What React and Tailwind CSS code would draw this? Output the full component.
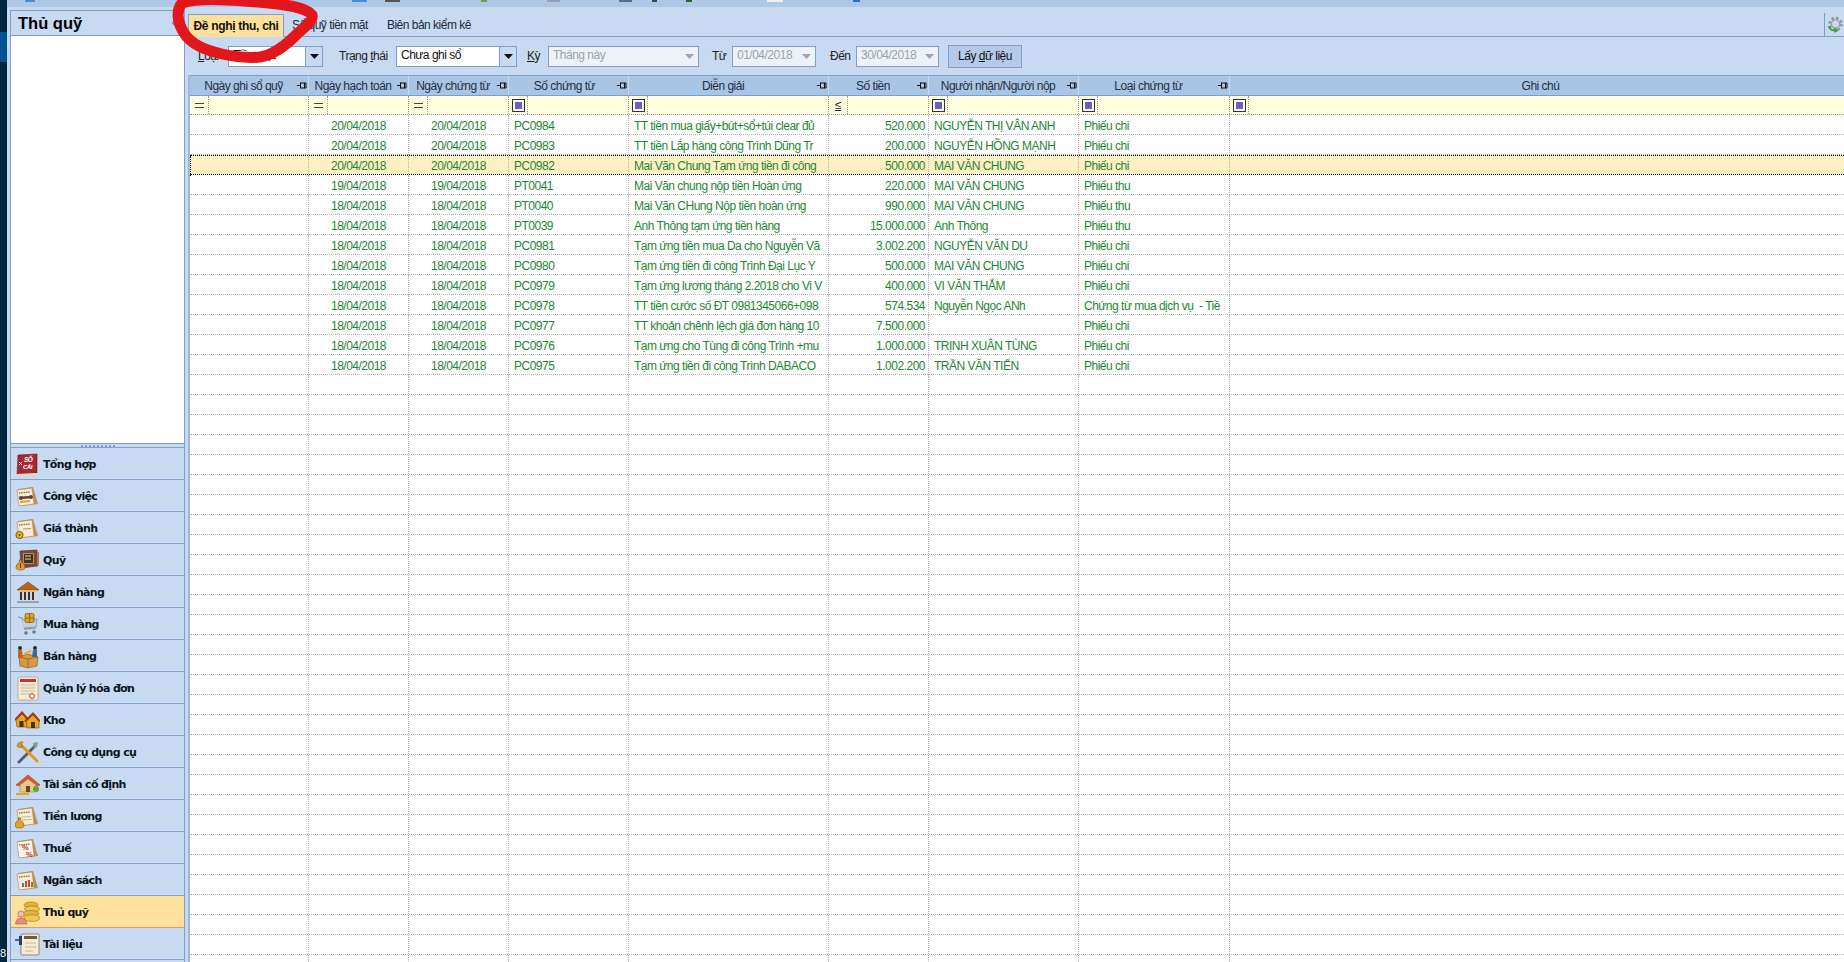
import React from "react";

const GRID = "grid grid-cols-[119px_100px_100px_120px_200px_100px_150px_151px_615px]";
const FONT = "font-['Liberation_Sans',Arial,sans-serif] text-[12px] tracking-[-0.5px]";

const Paper = ({ children, fill = "#f6ecd2" }) => (
  <>
    <path d="M3 5 L18 3 L23 20 L6 22 Z" fill="#b98f5c" />
    <path d="M2 6 L17 4 L19 20 L4 22 Z" fill={fill} stroke="#a98a60" strokeWidth="0.6" />
    <path d="M4 9 L15 8" stroke="#8a6f4c" strokeWidth="1.4" strokeDasharray="1.5 0.8" />
    {children}
  </>
);
const Bag = ({ x = 1, y = 14 }) => (
  <g transform={`translate(${x} ${y})`}>
    <path d="M3 0 L6 0 L5.2 2 Q9 4 9 7.5 Q9 10 4.5 10 Q0 10 0 7.5 Q0 4 3.8 2 Z" fill="#e8a020" stroke="#7a4a10" strokeWidth="0.6" />
  </g>
);

const icons = {
  tonghop: (
    <>
      <path d="M3 3 L22 2 L22 21 L2 22 Z" fill="#a32a30" stroke="#6d1a1e" strokeWidth="0.6" />
      <path d="M2 22 L22 21 L22 23 L3 24 Z" fill="#e8d8b8" />
      <path d="M4 10 l3 3 M7 10 l-3 3" stroke="#fff" strokeWidth="0.9" />
      <text x="9" y="10" fontSize="6.5" fontWeight="700" fontStyle="italic" fill="#fff" fontFamily="Liberation Sans">SỔ</text>
      <text x="8" y="17" fontSize="6" fontWeight="700" fontStyle="italic" fill="#fff" fontFamily="Liberation Sans">CÁI</text>
    </>
  ),
  congviec: (
    <Paper>
      <path d="M5 14 L16 13" stroke="#5b4630" strokeWidth="2.4" />
      <circle cx="6" cy="14" r="2" fill="#5b4630" />
      <circle cx="16" cy="13" r="2" fill="#5b4630" />
      <path d="M5 18 L15 17" stroke="#d9a441" strokeWidth="2" />
    </Paper>
  ),
  giathanh: (
    <Paper>
      <path d="M8 13 L16 12.5" stroke="#c98a4a" strokeWidth="1.2" />
      <circle cx="4.5" cy="19" r="3.6" fill="#e5b31f" stroke="#5b4210" strokeWidth="0.8" />
      <circle cx="4.5" cy="19" r="1" fill="#5b4210" />
    </Paper>
  ),
  quy: (
    <>
      <path d="M5 3 L22 2 L23 18 L6 20 Z" fill="#7b4a33" stroke="#4b2a1a" strokeWidth="0.6" />
      <rect x="8.5" y="5.5" width="10" height="10" fill="#3d3229" stroke="#c7a37e" strokeWidth="0.8" />
      <path d="M10 8 h6 M10 11 h6" stroke="#c4a95f" strokeWidth="1.3" />
      <path d="M22 4 L24 4 L24 17 L22 18 Z" fill="#b07a57" />
      <Bag x={1} y={12} />
      <path d="M5.5 15 v5" stroke="#7a3d10" strokeWidth="1.2" />
    </>
  ),
  nganhang: (
    <>
      <path d="M2 10 L13 2 L24 10 Z" fill="#b5651d" stroke="#6e3c10" strokeWidth="0.6" />
      <path d="M4 10 H22 V12 H4 Z" fill="#e6b77a" />
      <path d="M6 12 v8 M10 12 v8 M14 12 v8 M18 12 v8" stroke="#3f3128" strokeWidth="2" />
      <path d="M2 21 H24 V23 H2 Z" fill="#a9a099" />
    </>
  ),
  muahang: (
    <>
      <path d="M3 5 L7 6 L10 17 L21 16" stroke="#7f8f9c" strokeWidth="1.2" fill="none" />
      <path d="M7 8 L22 7 L21 15 L9 16" fill="#c4d2de" stroke="#7f8f9c" strokeWidth="0.8" />
      <rect x="10" y="1.5" width="9" height="9" rx="1.5" fill="#e0a51e" stroke="#7a5510" strokeWidth="0.7" />
      <path d="M14.5 1.5 v9 M10 6 h9" stroke="#8a5c12" strokeWidth="0.8" />
      <circle cx="11" cy="21" r="1.8" fill="#6d7a86" />
      <circle cx="19" cy="20" r="1.8" fill="#6d7a86" />
    </>
  ),
  banhang: (
    <>
      <path d="M4 13 L13 10 L23 13 L22 22 L13 24 L5 22 Z" fill="#d69a45" stroke="#7d5118" strokeWidth="0.6" />
      <path d="M13 15 V24 M4 13 L13 15 L23 13" stroke="#8a5b1c" strokeWidth="0.7" fill="none" />
      <circle cx="5" cy="4" r="2" fill="#2e2a26" />
      <path d="M3 6 L7 6 L8 14 L3 14 Z" fill="#c8601e" />
      <circle cx="20" cy="4" r="2" fill="#2e2a26" />
      <path d="M18 6 L22 6 L22 13 L17 13 Z" fill="#3e6a9b" />
      <path d="M9 10 L16 7" stroke="#e3b23c" strokeWidth="2.2" />
    </>
  ),
  hoadon: (
    <>
      <rect x="3" y="1" width="20" height="23" rx="1" fill="#f3ead8" stroke="#b39872" strokeWidth="0.7" />
      <rect x="5" y="3" width="16" height="3" fill="#c9372c" />
      <path d="M6 9 H20 M6 12 H20 M6 15 H20 M6 18 H15" stroke="#c9b894" strokeWidth="1" />
      <circle cx="17" cy="20" r="2.4" fill="none" stroke="#c9372c" strokeWidth="0.9" />
    </>
  ),
  kho: (
    <>
      <path d="M1 12 L7 6 L13 12 V19 H2 Z" fill="#e2a91f" stroke="#6e4a10" strokeWidth="0.6" />
      <path d="M0 12 L7 4.5 L13.5 12" fill="none" stroke="#b3301e" strokeWidth="2" />
      <path d="M11 13 L18 7 L24 13 V20 H12 Z" fill="#e2a91f" stroke="#6e4a10" strokeWidth="0.6" />
      <path d="M10 13.5 L18 5.5 L25 13.5" fill="none" stroke="#b3301e" strokeWidth="2" />
      <rect x="4.5" y="13" width="4" height="6" fill="#3e2f1e" />
      <rect x="16" y="14" width="4" height="6" fill="#3e2f1e" />
    </>
  ),
  congcu: (
    <>
      <path d="M4 22 L20 6" stroke="#5a5f63" strokeWidth="3" strokeLinecap="round" />
      <path d="M18 3 L23 2 L22 7 L19 8 Z" fill="#8d9398" />
      <path d="M6 5 L22 21" stroke="#d99a1f" strokeWidth="3" strokeLinecap="round" />
      <path d="M2 6 Q3 1 8 2 L6 5 L8 7 Q4 9 2 6 Z" fill="#d99a1f" stroke="#84590f" strokeWidth="0.5" />
    </>
  ),
  taisan: (
    <>
      <path d="M1 13 L13 3 L25 13 L22 14 L13 7 L4 14 Z" fill="#d8562a" stroke="#8f2f12" strokeWidth="0.5" />
      <path d="M5 13 L13 7 L21 13 V20 H5 Z" fill="#e9c690" stroke="#9a7540" strokeWidth="0.5" />
      <rect x="11" y="14" width="4" height="6" fill="#6b4322" />
      <path d="M1 22 H14" stroke="#e3a91e" strokeWidth="2.2" />
      <circle cx="21" cy="17" r="3" fill="#58a838" />
    </>
  ),
  tienluong: (
    <Paper>
      <path d="M7 13 L16 12.5 M7 16 L17 15.5" stroke="#c9b894" strokeWidth="1" />
      <Bag x={0} y={14} />
    </Paper>
  ),
  thue: (
    <Paper fill="#fbf5e7">
      <text x="7" y="14" fontSize="7.5" fontWeight="700" fill="#cc2a2a" fontFamily="Liberation Sans">%</text>
      <text x="11" y="21" fontSize="7.5" fontWeight="700" fill="#cc2a2a" fontFamily="Liberation Sans">%</text>
    </Paper>
  ),
  ngansach: (
    <Paper>
      <rect x="7" y="15" width="2" height="4" fill="#4a78b5" />
      <rect x="10" y="13" width="2" height="6" fill="#cc4a3a" />
      <rect x="13" y="12" width="2" height="7" fill="#cc4a3a" />
      <rect x="16" y="14" width="2" height="5" fill="#4e9a45" />
    </Paper>
  ),
  thuquy: (
    <>
      <ellipse cx="16" cy="5" rx="7" ry="3" fill="#e3b43c" stroke="#9a7413" strokeWidth="0.6" />
      <ellipse cx="17" cy="9" rx="7.5" ry="3" fill="#edc655" stroke="#9a7413" strokeWidth="0.6" />
      <ellipse cx="16" cy="13.5" rx="8" ry="3" fill="#e3b43c" stroke="#9a7413" strokeWidth="0.6" />
      <ellipse cx="17" cy="18" rx="8" ry="3.4" fill="#edc655" stroke="#9a7413" strokeWidth="0.6" />
      <circle cx="6" cy="14" r="3.2" fill="#f0bfa8" stroke="#8a4a38" strokeWidth="0.5" />
      <path d="M0.5 24 Q1 18 6 18 Q11 18 12 24 Z" fill="#e98b80" stroke="#a24a40" strokeWidth="0.5" />
    </>
  ),
  tailieu: (
    <>
      <rect x="6" y="2" width="18" height="21" rx="1" fill="#f4ebd6" stroke="#87704e" strokeWidth="0.8" />
      <rect x="9" y="4" width="13" height="3" fill="#6e5a40" />
      <path d="M10 11 H21 M10 15 H21 M10 19 H18" stroke="#c9b894" strokeWidth="1" />
      <path d="M0 8 L4 8" stroke="#3a67b0" strokeWidth="2" />
      <rect x="4" y="4" width="3" height="9" fill="#1f3d78" />
    </>
  ),
};

const navItems = [
  ["Tổng hợp", "tonghop"],
  ["Công việc", "congviec"],
  ["Giá thành", "giathanh"],
  ["Quỹ", "quy"],
  ["Ngân hàng", "nganhang"],
  ["Mua hàng", "muahang"],
  ["Bán hàng", "banhang"],
  ["Quản lý hóa đơn", "hoadon"],
  ["Kho", "kho"],
  ["Công cụ dụng cụ", "congcu"],
  ["Tài sản cố định", "taisan"],
  ["Tiền lương", "tienluong"],
  ["Thuế", "thue"],
  ["Ngân sách", "ngansach"],
  ["Thủ quỹ", "thuquy"],
  ["Tài liệu", "tailieu"],
];

const columns = [
  ["Ngày ghi sổ quỹ", "="],
  ["Ngày hạch toán", "="],
  ["Ngày chứng từ", "="],
  ["Số chứng từ", "s"],
  ["Diễn giải", "s"],
  ["Số tiền", "le"],
  ["Người nhận/Người nộp", "s"],
  ["Loại chứng từ", "s"],
  ["Ghi chú", "s"],
];

const rows = [
  ["20/04/2018", "PC0984", "TT tiền mua giấy+bút+sổ+túi clear đủ", "520.000", "NGUYỄN THỊ VÂN ANH", "Phiếu chi"],
  ["20/04/2018", "PC0983", "TT tiền Lắp hàng công Trình Dũng Tr", "200.000", "NGUYỄN HỒNG MẠNH", "Phiếu chi"],
  ["20/04/2018", "PC0982", "Mai Văn Chung Tạm ứng tiền đi công", "500.000", "MAI VĂN CHUNG", "Phiếu chi"],
  ["19/04/2018", "PT0041", "Mai Văn chung nộp tiền Hoàn ứng", "220.000", "MAI VĂN CHUNG", "Phiếu thu"],
  ["18/04/2018", "PT0040", "Mai Văn CHung Nộp tiền hoàn ứng", "990.000", "MAI VĂN CHUNG", "Phiếu thu"],
  ["18/04/2018", "PT0039", "Anh Thông tạm ứng tiền hàng", "15.000.000", "Anh Thông", "Phiếu thu"],
  ["18/04/2018", "PC0981", "Tạm ứng tiền mua Da cho Nguyễn Vă", "3.002.200", "NGUYỄN VĂN DU", "Phiếu chi"],
  ["18/04/2018", "PC0980", "Tạm ứng tiền đi công Trình Đại Lục Y", "500.000", "MAI VĂN CHUNG", "Phiếu chi"],
  ["18/04/2018", "PC0979", "Tạm ứng lương tháng 2.2018 cho Vi V", "400.000", "VI VĂN THẮM", "Phiếu chi"],
  ["18/04/2018", "PC0978", "TT tiền cước số ĐT 0981345066+098", "574.534", "Nguyễn Ngọc ANh", "Chứng từ mua dịch vụ  - Tiề"],
  ["18/04/2018", "PC0977", "TT khoản chênh lệch giá đơn hàng 10", "7.500.000", "", "Phiếu chi"],
  ["18/04/2018", "PC0976", "Tạm ưng cho Tùng đi công Trình +mu", "1.000.000", "TRỊNH XUÂN TÙNG", "Phiếu chi"],
  ["18/04/2018", "PC0975", "Tạm ứng tiền đi công Trình DABACO", "1.002.200", "TRẦN VĂN TIẾN", "Phiếu chi"],
];

const Pin = () => (
  <svg width="10" height="9" viewBox="0 0 10 9" className="shrink-0">
    <path d="M0 4.5 H3 M3.5 1.5 V7.5 M3.5 2 H9 V7 H3.5 M7.5 2 V7" stroke="#111" strokeWidth="1" fill="none" />
  </svg>
);

const Arrow = ({ color = "#111" }) => (
  <svg width="9" height="5" viewBox="0 0 9 5"><path d="M0 0 H9 L4.5 5 Z" fill={color} /></svg>
);

const Combo = ({ w, text, disabled }) => (
  <div className={`${w} h-[21px] flex items-stretch border border-[#7e9fc8] ${disabled ? "bg-[#eef2f7] text-[#9aa3ad]" : "bg-white text-[#111]"}`}>
    <span className="flex-1 pl-[4px] leading-[17px] whitespace-nowrap overflow-hidden">{text}</span>
    <span className={`w-[17px] flex items-center justify-center ${disabled ? "" : "bg-[#c8daf1] border-l border-[#7e9fc8]"}`}>
      <Arrow color={disabled ? "#9aa3ad" : "#111"} />
    </span>
  </div>
);

const Op = ({ kind }) => {
  if (kind === "=")
    return (
      <span className="w-[19px] flex items-center justify-center border-r border-dotted border-[#999]">
        <span className="w-[9px] h-[5px] border-y border-[#444]" />
      </span>
    );
  if (kind === "le")
    return (
      <span className="w-[19px] flex items-center justify-center border-r border-dotted border-[#999] text-[#222] text-[12px] underline">≤</span>
    );
  return (
    <span className="w-[19px] flex items-center justify-center border-r border-dotted border-[#999]">
      <span className="w-[13px] h-[13px] border border-[#333] bg-white flex items-center justify-center">
        <span className="w-[7px] h-[7px] bg-[#6a5fc9]" />
      </span>
    </span>
  );
};

const topBits = [
  "ml-[18px] w-[10px] bg-[#eaf2fb] border border-[#4a8bd0]",
  "ml-[317px] w-[15px] bg-[#4a8bd0]",
  "ml-[18px] w-[15px] bg-[#555]",
  "ml-[81px] w-[6px] bg-[#6aa84a]",
  "ml-[60px] w-[13px] bg-[#94a2b4]",
  "ml-[59px] w-[13px] bg-[#dde6f2] border border-[#5c6c88]",
  "ml-[20px] w-[5px] bg-[#444]",
  "ml-[29px] w-[6px] bg-[#1c6a2a]",
  "ml-[75px] w-[16px] bg-[#f0f0f0]",
  "ml-[70px] w-[7px] bg-[#2a72c8]",
];

export default function App() {
  return (
    <div className={`relative w-[1844px] h-[962px] overflow-hidden flex bg-[#c8daf1] ${FONT}`}>
      {/* desktop edge */}
      <div className="w-[7px] h-full flex flex-col bg-[#012840]">
        <div className="h-[32px]" />
        <div className="h-[30px] bg-[#01538d]" />
        <div className="flex-1" />
        <span className="text-white text-[11px] leading-[14px] pb-[2px] tracking-normal">8</span>
      </div>

      <div className="flex-1 flex flex-col min-w-0">
        {/* top strip */}
        <div className="h-[7px] bg-[#aec7e6] flex items-start">
          {topBits.map((c, i) => (
            <span key={i} className={`h-[2px] ${c}`} />
          ))}
        </div>

        <div className="flex-1 flex min-h-0">
          {/* sidebar */}
          <aside className="ml-[3px] mt-[3px] w-[175px] flex flex-col border-x border-[#7e9fc8]">
            <div className="h-[26px] flex items-center justify-between border-y border-[#7e9fc8] pl-[7px] pr-[6px]">
              <span className="font-bold text-[16.5px] tracking-normal text-black">Thủ quỹ</span>
              <svg width="7" height="10" viewBox="0 0 7 10"><path d="M6 1 L1.5 5 L6 9" stroke="#6e8fb8" strokeWidth="1.4" fill="none" /></svg>
            </div>
            <div className="h-[407px] bg-white" />
            <div className="h-[5px] flex items-center justify-center gap-[2px] border-y border-[#7e9fc8]">
              {Array.from({ length: 9 }).map((_, i) => (
                <span key={i} className="w-[2px] h-[2px] bg-[#7e9fc8]" />
              ))}
            </div>
            {navItems.map(([label, key]) => {
              const active = label === "Thủ quỹ";
              return (
                <div
                  key={key}
                  className={`h-[32px] shrink-0 flex items-center pt-[3px] border-b ${active ? "bg-[#fde29c] border-[#e39a60]" : "border-[#7e9fc8]"}`}
                >
                  <svg width="25" height="25" viewBox="0 0 25 25" className="ml-[4px] shrink-0 -mt-[2px]">
                    {icons[key]}
                  </svg>
                  <span className="ml-[3px] font-['DejaVu_Sans',sans-serif] font-bold text-[11px] tracking-[-0.65px] text-[#0b1420] whitespace-nowrap">
                    {label}
                  </span>
                </div>
              );
            })}
          </aside>

          {/* main */}
          <main className="flex-1 min-w-0 flex flex-col">
            {/* tabs */}
            <div className="h-[30px] shrink-0 flex items-end border-b border-[#7e9fc8] text-[#1c2a3a]">
              <div className="ml-[3px] w-[96px] h-[23px] -mb-px flex items-center justify-center bg-[#fee09a] border border-[#7e9fc8] border-b-0 font-bold tracking-[-0.3px] text-[#111]">
                Đề nghị thu, chi
              </div>
              <span className="ml-[8px] h-[23px] leading-[24px]">Sổ quỹ tiền mặt</span>
              <span className="ml-[19px] h-[23px] leading-[24px]">Biên bản kiểm kê</span>
              <div className="ml-auto w-[20px] h-[23px] border-l border-[#7e9fc8] flex items-center justify-center">
                <svg width="18" height="18" viewBox="0 0 18 18">
                  <circle cx="9.5" cy="8" r="6" fill="none" stroke="#8e9296" strokeWidth="2.4" strokeDasharray="2.4 2.3" />
                  <circle cx="9.5" cy="8" r="4.2" fill="none" stroke="#9ca0a4" strokeWidth="1.5" />
                  <path d="M3 10 Q3.5 14.5 9 14.5" fill="none" stroke="#2fa52f" strokeWidth="2" />
                  <path d="M8.5 11.5 L12.5 14.5 L8.5 17 Z" fill="#2fa52f" />
                </svg>
              </div>
            </div>

            {/* toolbar */}
            <div className="h-[38px] shrink-0 flex items-center text-[#222]">
              <span className="ml-[13px] w-[30px]"><u>L</u>oại</span>
              <Combo w="w-[95px]" text="Tiền mặt" />
              <span className="ml-[16px] w-[57px]">Trạng <u>t</u>hái</span>
              <Combo w="w-[121px]" text="Chưa ghi sổ" />
              <span className="ml-[10px] w-[21px]"><u>K</u>ỳ</span>
              <Combo w="w-[151px]" text="Tháng này" disabled />
              <span className="ml-[13px] w-[20px]">Từ</span>
              <Combo w="w-[84px]" text="01/04/2018" disabled />
              <span className="ml-[14px] w-[26px]">Đến</span>
              <Combo w="w-[83px]" text="30/04/2018" disabled />
              <button className="ml-[9px] w-[74px] h-[23px] bg-[#b3cbe9] border border-[#7e9fc8] text-[#111] tracking-[-0.5px]">
                Lấy <u>d</u>ữ liệu
              </button>
            </div>

            {/* grid */}
            <div className="flex-1 min-h-0 ml-[3px] border-l-[2px] border-[#9fb9dc] bg-white overflow-hidden">
              <div className={`${GRID} h-[21px] bg-[#a9c5e6] border-y border-[#7e9fc8] text-[#1f2f45]`}>
                {columns.map(([t], i) => (
                  <div key={t} className={`flex items-center pr-[1px] border-r border-[#c8daf1] min-w-0 ${i === 8 ? "pl-[8px]" : ""} ${i === 3 ? "pl-[3px]" : ""}`}>
                    <span className="flex-1 text-center whitespace-nowrap">{t}</span>
                    {i < 8 && <Pin />}
                  </div>
                ))}
              </div>
              <div className={`${GRID} h-[19px] bg-[#ffffe0] border-b border-dotted border-[#999]`}>
                {columns.map(([t, k]) => (
                  <div key={t} className="flex items-stretch border-r border-dotted border-[#999]">
                    <Op kind={k} />
                  </div>
                ))}
              </div>
              {Array.from({ length: 43 }).map((_, i) => {
                const r = rows[i];
                const sel = i === 2;
                return (
                  <div
                    key={i}
                    className={`${GRID} h-[20px] text-[#1d8636] ${
                      sel ? "leading-[20px] bg-[#fdf1c4] border-y border-dotted border-black" : "leading-[22px] border-b border-dotted border-[#b5b5b5]"
                    }`}
                  >
                    <div className={`border-r border-dotted border-r-[#b5b5b5] ${sel ? "border-l border-l-black" : ""}`} />
                    <div className="text-center border-r border-dotted border-[#b5b5b5]">{r && r[0]}</div>
                    <div className="text-center border-r border-dotted border-[#b5b5b5]">{r && r[0]}</div>
                    <div className="pl-[5px] border-r border-dotted border-[#b5b5b5]">{r && r[1]}</div>
                    <div className="pl-[5px] border-r border-dotted border-[#b5b5b5] whitespace-nowrap overflow-hidden">{r && r[2]}</div>
                    <div className="pr-[3px] text-right border-r border-dotted border-[#b5b5b5]">{r && r[3]}</div>
                    <div className="pl-[5px] border-r border-dotted border-[#b5b5b5] whitespace-nowrap overflow-hidden">{r && r[4]}</div>
                    <div className="pl-[5px] border-r border-dotted border-[#b5b5b5] whitespace-pre overflow-hidden">{r && r[5]}</div>
                    <div />
                  </div>
                );
              })}
            </div>
          </main>
        </div>
      </div>

      {/* hand-drawn annotation */}
      <svg className="absolute left-0 top-0 pointer-events-none" width="340" height="80" viewBox="0 0 340 80">
        <path
          d="M182 3 C176 10 177 22 184 33 C190 43 204 50 222 54 C236 57 250 58 260 57 C274 55 286 45 296 35 C304 27 314 21 312 15 C306 7 282 4 258 2 C230 0 200 -3 182 3 Z"
          fill="none"
          stroke="#e2171c"
          strokeWidth="11"
          strokeLinejoin="round"
        />
      </svg>
    </div>
  );
}
